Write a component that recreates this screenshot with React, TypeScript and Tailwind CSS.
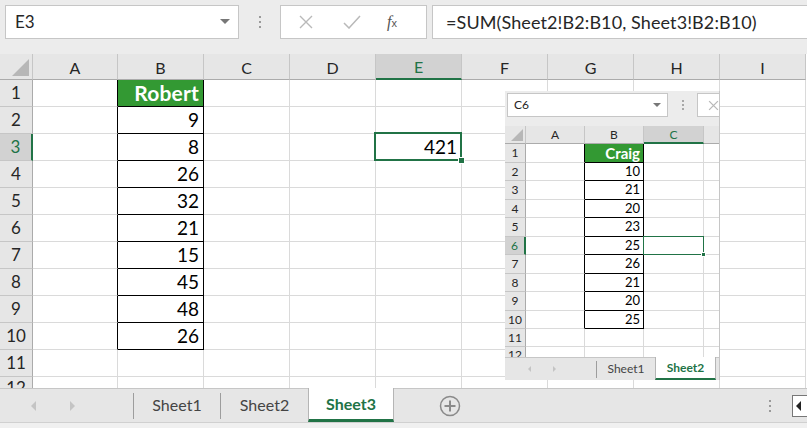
import React from 'react'

const mainCols = ['A', 'B', 'C', 'D', 'E', 'F', 'G', 'H', 'I']
const robert = [9, 8, 26, 32, 21, 15, 45, 48, 26]
const craig = [10, 21, 20, 23, 25, 26, 21, 20, 25]

function Corner({ small }: { small?: boolean }) {
  return (
    <div className="relative bg-[#e6e6e6] border-r border-b border-r-[#c6c6c6] border-b-[#ababab]">
      <svg
        className={small ? 'absolute right-[2px] bottom-[2px]' : 'absolute right-[3px] bottom-[3px]'}
        width={small ? 12 : 17}
        height={small ? 12 : 17}
        viewBox="0 0 10 10"
      >
        <polygon points="10,0 10,10 0,10" fill="#b7b7b7" />
      </svg>
    </div>
  )
}

function cellBorder(col: number, row: number) {
  // col 0 = A, col 1 = B; the B1:B10 block carries thin black borders
  const right = (col === 0 || col === 1) && row >= 1 && row <= 10 ? 'border-r-black' : 'border-r-[#dadada]'
  const bottom = col === 1 && row >= 1 && row <= 10 ? 'border-b-black' : 'border-b-[#dadada]'
  return right + ' ' + bottom
}

function MainGrid() {
  const rows = Array.from({ length: 12 }, (_, i) => i + 1)
  return (
    <div className="grid grid-cols-[33px_85px_86px_86px_86px_86px_86px_86px_86px_86px] grid-rows-[26px_repeat(11,27px)_11px] h-[334px] overflow-hidden">
      <Corner />
      {mainCols.map(c =>
        c === 'E' ? (
          <div
            key={c}
            className="flex items-center justify-center bg-[#d2d2d2] border-r border-r-[#c6c6c6] border-b-2 border-b-[#217346] text-[#217346] text-[16px] pt-[2px]"
          >
            {c}
          </div>
        ) : (
          <div
            key={c}
            className="flex items-center justify-center bg-[#e6e6e6] border-r border-b border-r-[#c6c6c6] border-b-[#ababab] text-[#262626] text-[16px] pt-[2px]"
          >
            {c}
          </div>
        )
      )}
      {rows.map(r => (
        <React.Fragment key={r}>
          {r === 3 ? (
            <div className="flex items-center justify-center bg-[#d2d2d2] border-r-2 border-b border-r-[#217346] border-b-[#c6c6c6] text-[#217346] text-[17px]">
              {r}
            </div>
          ) : (
            <div
              className={
                r === 12
                  ? 'flex items-start justify-center bg-[#e6e6e6] border-r border-r-[#ababab] text-[#262626] text-[17px] leading-[22px] overflow-hidden'
                  : 'flex items-center justify-center bg-[#e6e6e6] border-r border-b border-r-[#ababab] border-b-[#c6c6c6] text-[#262626] text-[17px]'
              }
            >
              {r}
            </div>
          )}
          {mainCols.map((c, ci) => {
            const border = cellBorder(ci, r)
            if (c === 'B' && r === 1) {
              return (
                <div
                  key={c}
                  className={'flex items-center justify-end pr-[4px] bg-[#339933] border-r border-b text-white font-bold text-[21px] tracking-[0.2px] ' + border}
                >
                  Robert
                </div>
              )
            }
            if (c === 'B' && r >= 2 && r <= 10) {
              return (
                <div key={c} className={'flex items-center justify-end pr-[4px] border-r border-b text-black text-[19px] ' + border}>
                  {robert[r - 2]}
                </div>
              )
            }
            if (c === 'E' && r === 3) {
              return (
                <div key={c} className={'relative flex items-center justify-end pr-[4px] border-r border-b text-black text-[19px] ' + border}>
                  421
                  <div className="absolute -left-[2px] -top-[2px] -right-[1px] -bottom-[1px] border-2 border-[#217346]" />
                  <div className="absolute -right-[4px] -bottom-[4px] w-[7px] h-[7px] bg-[#217346] border border-white" />
                </div>
              )
            }
            return <div key={c} className={r === 12 ? 'border-r border-r-[#dadada]' : 'border-r border-b ' + border} />
          })}
        </React.Fragment>
      ))}
    </div>
  )
}

function TopBar() {
  return (
    <div className="h-[54px] bg-[#ececec] flex items-start pt-[5px] pl-[5px]">
      <div className="w-[234px] h-[34px] shrink-0 bg-white border border-[#c6c6c6] flex items-center justify-between pl-[9px] pr-[8px]">
        <span className="text-[17px] text-[#262626]">E3</span>
        <svg width="10" height="6" viewBox="0 0 10 6">
          <polygon points="0,0 10,0 5,5" fill="#777" />
        </svg>
      </div>
      <div className="w-[41px] h-[34px] shrink-0 flex flex-col items-center justify-center gap-[3px]">
        <div className="w-[2px] h-[2px] bg-[#9a9a9a]" />
        <div className="w-[2px] h-[2px] bg-[#9a9a9a]" />
        <div className="w-[2px] h-[2px] bg-[#9a9a9a]" />
      </div>
      <div className="w-[147px] h-[34px] shrink-0 bg-white border border-[#c6c6c6] flex items-center">
        <svg className="ml-[18px]" width="14" height="14" viewBox="0 0 14 14">
          <path d="M1 1 L13 13 M13 1 L1 13" stroke="#b9b9b9" strokeWidth="1.4" fill="none" />
        </svg>
        <svg className="ml-[30px]" width="18" height="14" viewBox="0 0 18 14">
          <path d="M1 8 L6 13 L17 1" stroke="#b9b9b9" strokeWidth="1.5" fill="none" />
        </svg>
        <span className="ml-[26px] italic text-[16px] text-[#555] [font-family:'Liberation_Serif',serif] leading-none">
          f<span className="text-[11px] not-italic [font-family:'Liberation_Sans',sans-serif]">x</span>
        </span>
      </div>
      <div className="ml-[5px] flex-1 h-[34px] bg-white border border-r-0 border-[#c6c6c6] flex items-center pl-[13px]">
        <span className="text-[18px] text-[#262626] whitespace-nowrap tracking-[0.1px]">=SUM(Sheet2!B2:B10, Sheet3!B2:B10)</span>
      </div>
    </div>
  )
}

function TabArrows({ gap, size }: { gap: number; size: number }) {
  return (
    <div className="flex items-center" style={{ gap }}>
      <svg width={size} height={size * 2} viewBox="0 0 5 10">
        <polygon points="5,0 5,10 0,5" fill="#c4c4c4" />
      </svg>
      <svg width={size} height={size * 2} viewBox="0 0 5 10">
        <polygon points="0,0 0,10 5,5" fill="#c4c4c4" />
      </svg>
    </div>
  )
}

function MainTabs() {
  return (
    <div className="h-[34px] bg-[#e6e6e6] border-t border-[#c6c6c6] flex items-stretch">
      <div className="w-[133px] flex items-center pl-[31px]">
        <TabArrows gap={34} size={5} />
      </div>
      <div className="w-px h-[26px] self-center bg-[#9d9d9d]" />
      <div className="w-[86px] flex items-center justify-center text-[16px] text-[#444] pb-[1px]">Sheet1</div>
      <div className="w-px h-[26px] self-center bg-[#9d9d9d]" />
      <div className="w-[87px] flex items-center justify-center text-[16px] text-[#444] pb-[1px]">Sheet2</div>
      <div className="w-[86px] -mt-px bg-white border-l border-r border-[#b5b5b5] border-b-[3px] border-b-[#217346] flex items-center justify-center text-[16px] font-bold text-[#217346]">
        Sheet3
      </div>
      <div className="ml-[45px] flex items-center">
        <svg width="22" height="22" viewBox="0 0 22 22">
          <circle cx="11" cy="11" r="9.5" stroke="#8a8a8a" strokeWidth="1.5" fill="none" />
          <path d="M11 5.5 V16.5 M5.5 11 H16.5" stroke="#8a8a8a" strokeWidth="2" />
        </svg>
      </div>
      <div className="flex-1" />
      <div className="w-[4px] flex flex-col items-center justify-center gap-[3px] mr-[20px]">
        <div className="w-[2px] h-[2px] bg-[#9a9a9a]" />
        <div className="w-[2px] h-[2px] bg-[#9a9a9a]" />
        <div className="w-[2px] h-[2px] bg-[#9a9a9a]" />
      </div>
      <div className="w-[15px] h-[22px] self-center bg-white border border-r-0 border-[#777] flex items-center pl-[3px]">
        <svg width="5" height="10" viewBox="0 0 5 10">
          <polygon points="5,0 5,10 0,5" fill="#222" />
        </svg>
      </div>
    </div>
  )
}

function SmallWindow() {
  const cols = ['A', 'B', 'C', 'D']
  const rows = Array.from({ length: 12 }, (_, i) => i + 1)
  return (
    <div className="absolute left-[505px] top-[91px] w-[215px] h-[289px] bg-[#ececec] border-r border-[#c6c6c6] overflow-hidden flex flex-col">
      <div className="h-[35px] flex items-start pt-[2px] pl-[2px] shrink-0 overflow-hidden">
        <div className="w-[161px] h-[24px] shrink-0 bg-white border border-[#c6c6c6] flex items-center justify-between pl-[6px] pr-[6px]">
          <span className="text-[12px] text-[#262626]">C6</span>
          <svg width="8" height="4" viewBox="0 0 8 4">
            <polygon points="0,0 8,0 4,4" fill="#777" />
          </svg>
        </div>
        <div className="w-[29px] h-[24px] shrink-0 flex flex-col items-center justify-center gap-[2px]">
          <div className="w-[2px] h-[2px] bg-[#a8a8a8]" />
          <div className="w-[2px] h-[2px] bg-[#a8a8a8]" />
          <div className="w-[2px] h-[2px] bg-[#a8a8a8]" />
        </div>
        <div className="w-[40px] h-[24px] shrink-0 bg-white border border-[#c6c6c6] flex items-center pl-[10px]">
          <svg width="11" height="11" viewBox="0 0 10 10">
            <path d="M1 1 L9 9 M9 1 L1 9" stroke="#b9b9b9" strokeWidth="1.2" fill="none" />
          </svg>
        </div>
      </div>
      <div className="grid grid-cols-[21px_59px_59px_60px_16px] grid-rows-[18px_19px_18px_19px_18px_19px_18px_19px_18px_19px_18px_18px_10px] h-[231px] bg-white overflow-hidden shrink-0">
        <Corner small />
        {cols.map(c =>
          c === 'C' ? (
            <div
              key={c}
              className="flex items-center justify-center bg-[#d2d2d2] border-r border-r-[#c6c6c6] border-b-2 border-b-[#217346] text-[#217346] text-[12px] pt-[1px]"
            >
              {c}
            </div>
          ) : c === 'D' ? (
            <div key={c} className="bg-[#e6e6e6] border-r border-b border-r-[#c6c6c6] border-b-[#ababab]" />
          ) : (
            <div
              key={c}
              className="flex items-center justify-center bg-[#e6e6e6] border-r border-b border-r-[#c6c6c6] border-b-[#ababab] text-[#262626] text-[12px]"
            >
              {c}
            </div>
          )
        )}
        {rows.map(r => (
          <React.Fragment key={r}>
            {r === 6 ? (
              <div className="flex items-center justify-center bg-[#d2d2d2] border-r-2 border-b border-r-[#217346] border-b-[#c6c6c6] text-[#217346] text-[12px]">
                {r}
              </div>
            ) : (
              <div
                className={
                  r === 12
                    ? 'flex items-start justify-center bg-[#e6e6e6] border-r border-r-[#ababab] text-[#262626] text-[12px] leading-[16px] overflow-hidden'
                    : 'flex items-center justify-center bg-[#e6e6e6] border-r border-b border-r-[#ababab] border-b-[#c6c6c6] text-[#262626] text-[12px]'
                }
              >
                {r}
              </div>
            )}
            {cols.map((c, ci) => {
              const border = cellBorder(ci, r)
              if (c === 'B' && r === 1) {
                return (
                  <div
                    key={c}
                    className={'flex items-center justify-end pr-[3px] bg-[#339933] border-r border-b text-white font-bold text-[15px] ' + border}
                  >
                    Craig
                  </div>
                )
              }
              if (c === 'B' && r >= 2 && r <= 10) {
                return (
                  <div key={c} className={'flex items-center justify-end pr-[3px] border-r border-b text-black text-[13px] ' + border}>
                    {craig[r - 2]}
                  </div>
                )
              }
              if (c === 'C' && r === 6) {
                return (
                  <div key={c} className={'relative border-r border-b ' + border}>
                    <div className="absolute -left-px -top-px -right-px -bottom-px border border-[#217346]" />
                    <div className="absolute -right-[3px] -bottom-[3px] w-[5px] h-[5px] bg-[#217346] border border-white" />
                  </div>
                )
              }
              return <div key={c} className={r === 12 ? 'border-r border-r-[#dadada]' : 'border-r border-b ' + border} />
            })}
          </React.Fragment>
        ))}
      </div>
      <div className="h-[23px] bg-[#e6e6e6] border-t border-[#c6c6c6] flex items-stretch shrink-0">
        <div className="w-[91px] flex items-center pl-[23px]">
          <TabArrows gap={22} size={3} />
        </div>
        <div className="w-px h-[17px] self-center bg-[#9d9d9d]" />
        <div className="w-[58px] flex items-center justify-center text-[12px] text-[#444]">Sheet1</div>
        <div className="w-[61px] -mt-px bg-white border-l border-r border-[#b5b5b5] border-b-2 border-b-[#217346] flex items-center justify-center text-[12px] font-bold text-[#217346]">
          Sheet2
        </div>
      </div>
    </div>
  )
}

export default function App() {
  return (
    <div className="relative w-[807px] h-[428px] overflow-hidden bg-white [font-family:Lato,sans-serif]">
      <TopBar />
      <MainGrid />
      <MainTabs />
      <div className="h-[6px] bg-[#f0f0f0] border-t border-[#d0d0d0]" />
      <SmallWindow />
    </div>
  )
}
